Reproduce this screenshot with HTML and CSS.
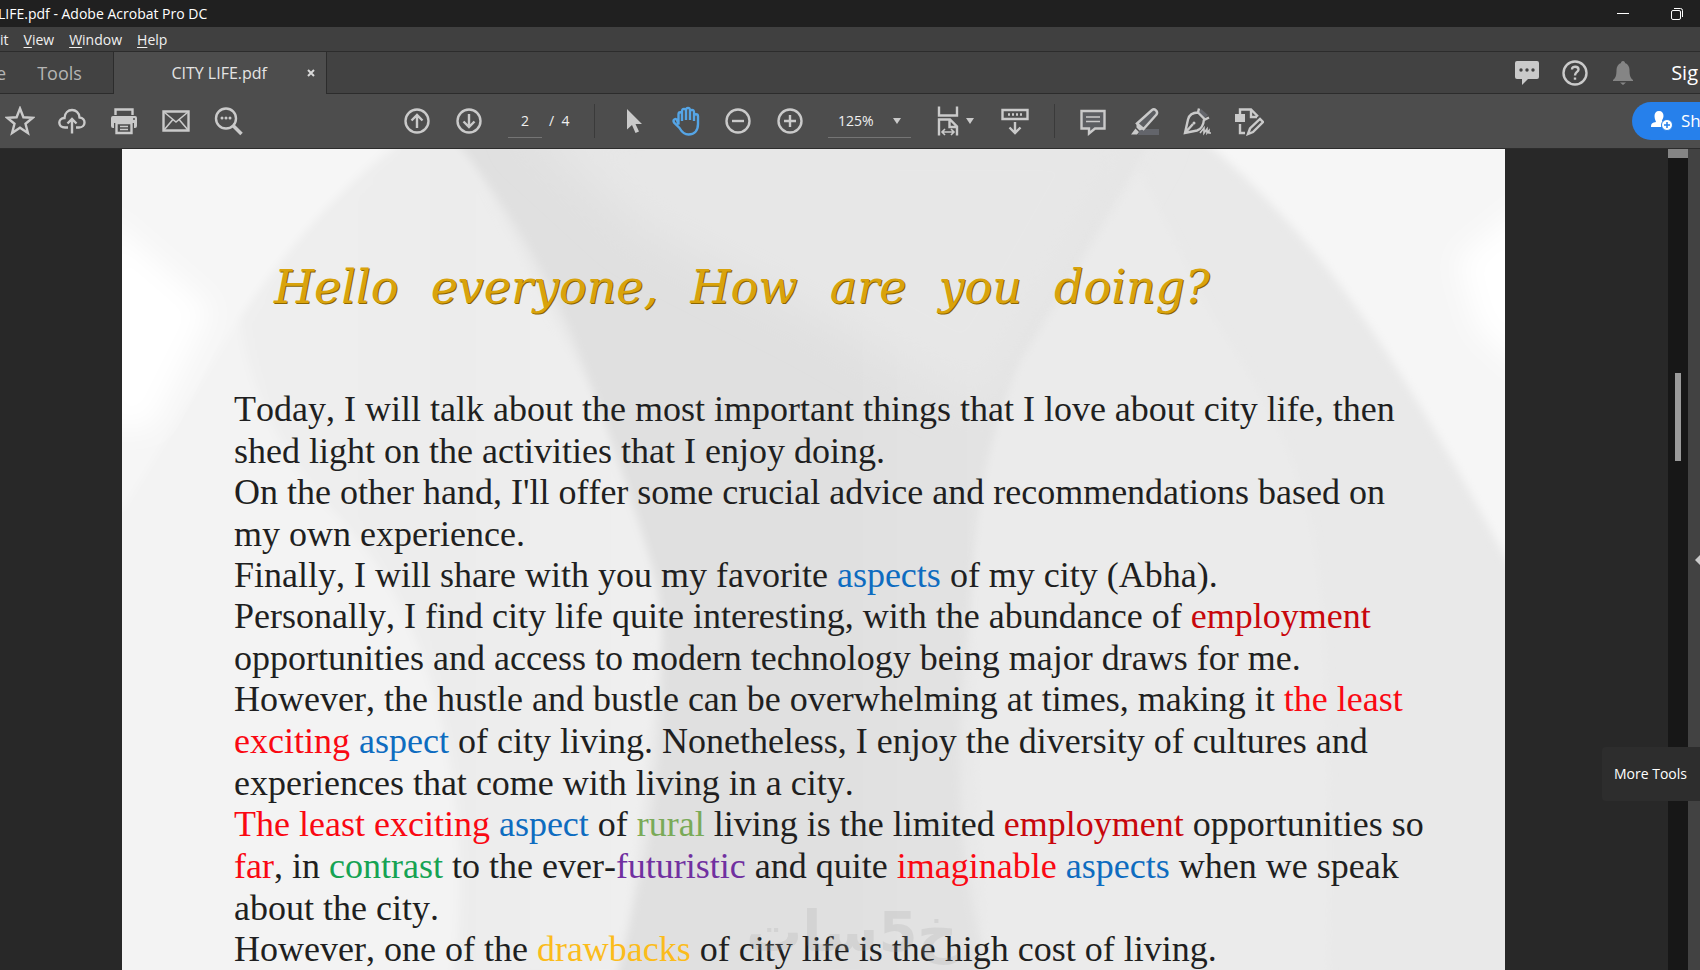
FILE: index.html
```html
<!DOCTYPE html>
<html lang="en">
<head>
<meta charset="utf-8">
<title>CITY LIFE.pdf - Adobe Acrobat Pro DC</title>
<link rel="stylesheet" href="styles.css">
</head>
<body>
<header class="titlebar">
  <span class="titlebar-text">LIFE.pdf - Adobe Acrobat Pro DC</span>
  <button class="win-btn" aria-label="Minimize"><svg width="12" height="12" viewBox="0 0 12 12"><path d="M0 5.500h12" stroke="#fff"/></svg></button>
  <button class="win-btn" aria-label="Restore"><svg width="12" height="12" viewBox="0 0 12 12" fill="none" stroke="#fff"><rect x=".5" y="2.500" width="9" height="9" rx="1.500"/><path d="M3 .5h6.500a2 2 0 0 1 2 2V9"/></svg></button>
</header>
<nav class="menubar">
  <button class="menu">it</button>
  <button class="menu"><u>V</u>iew</button>
  <button class="menu"><u>W</u>indow</button>
  <button class="menu"><u>H</u>elp</button>
</nav>
<div class="tabs">
  <button class="tab tab-home">e</button>
  <button class="tab tab-tools">Tools</button>
  <div class="tab-active"><span>CITY LIFE.pdf</span><button class="close" aria-label="Close tab"><svg width="8" height="8" viewBox="0 0 8 8"><path d="M1 1l6 6M7 1L1 7" stroke="#d8d8d8" stroke-width="2"/></svg></button></div>
  <div class="account">
    <button class="acc" aria-label="Messages"><svg width="26" height="26" viewBox="0 0 26 26"><path fill="#cacaca" d="M3 1h20a2 2 0 0 1 2 2v14a2 2 0 0 1-2 2h-9l-6 6v-6H3a2 2 0 0 1-2-2V3a2 2 0 0 1 2-2z"/><g fill="#424242"><circle cx="7" cy="10" r="1.700"/><circle cx="13" cy="10" r="1.700"/><circle cx="19" cy="10" r="1.700"/></g></svg></button>
    <button class="acc" aria-label="Help"><svg width="26" height="26" viewBox="0 0 26 26" fill="none" stroke="#cacaca" stroke-width="2.400"><circle cx="13" cy="13" r="11.500"/><path d="M10 9.500c0-4 6.500-3.500 6.500 0 0 2.500-3.500 2.500-3.500 6"/><path d="M13 17.500v2.200"/></svg></button>
    <button class="acc" aria-label="Notifications"><svg width="22" height="26" viewBox="0 0 22 26" fill="#858585"><path d="M11 1c1.500 0 2 1 2 2 3 1 4.500 4 4.500 7 0 6 1 8 3.500 10v1H1v-1c2.500-2 3.500-4 3.500-10 0-3 1.500-6 4.500-7 0-1 .5-2 2-2zM8 22.500h6l-3 2.500z"/></svg></button>
    <a class="signin" href="#">Sig</a>
  </div>
</div>
<div class="toolbar">
  <div class="group group-file">
    <button class="tool" aria-label="Star"><svg width="30" height="30" viewBox="0 0 30 30"><path d="M15 2.500l3.400 8.800 9.400.5-7.300 6 2.400 9.200-7.900-5.200L7.100 27l2.400-9.200-7.300-6 9.400-.5z"/></svg></button>
    <button class="tool" aria-label="Upload"><svg width="30" height="30" viewBox="0 0 30 30"><path d="M11 21.500H8C.500 21.500.500 12 7.500 12 8 1.500 22 1.500 22.500 11.500 29.500 12 29 21.500 22 21.500h-3M15 27.500V13M10.500 17.500L15 13l4.500 4.500"/></svg></button>
    <button class="tool" aria-label="Print"><svg width="30" height="30" viewBox="0 0 30 30"><path d="M6.500 9V3.500h17V9"/><path class="solid" d="M4 10h22a2 2 0 0 1 2 2v8a2 2 0 0 1-2 2h-1v-5H5v5H4a2 2 0 0 1-2-2v-8a2 2 0 0 1 2-2z"/><path d="M7.500 17h15v10h-15z"/><path class="thin" d="M11 20.500h8M11 23.500h8"/><circle cx="25" cy="13" r="1" fill="#4d4d4d" stroke="none"/></svg></button>
    <button class="tool" aria-label="Email"><svg width="30" height="30" viewBox="0 0 30 30"><path d="M2.500 5.500h25v19h-25z"/><path class="thin" d="M3 6l12 10L27 6M3 24l8.500-10M27 24l-8.500-10"/></svg></button>
    <button class="tool" aria-label="Find"><svg width="30" height="30" viewBox="0 0 30 30"><circle cx="13" cy="12.500" r="10"/><path stroke-width="3.500" d="M20 19.500l8.500 8.500"/><g class="solid"><circle cx="9" cy="12" r="1.500"/><circle cx="13" cy="12" r="1.500"/><circle cx="17" cy="12" r="1.500"/></g></svg></button>
  </div>
  <div class="group group-page">
    <button class="tool" aria-label="Previous page"><svg width="30" height="30" viewBox="0 0 30 30"><circle cx="15" cy="15" r="11.500"/><path d="M15 22V9.500M9.500 14.500L15 9l5.500 5.500"/></svg></button>
    <button class="tool" aria-label="Next page"><svg width="30" height="30" viewBox="0 0 30 30"><circle cx="15" cy="15" r="11.500"/><path d="M15 8v12.500M9.500 15.500L15 21l5.500-5.500"/></svg></button>
    <input class="page-input" aria-label="Page number" value="2">
    <span class="page-total">/&nbsp; 4</span>
  </div>
  <div class="group group-view">
    <button class="tool" aria-label="Select"><svg width="30" height="30" viewBox="0 0 30 30"><path class="solid" d="M8 3v20.500l5-4.500 3.500 8 3.500-1.500-3.500-7.500h6.500z"/></svg></button>
    <button class="tool tool-on" aria-label="Pan"><svg width="30" height="30" viewBox="0 0 30 30"><path d="M7.500 18.500V8.500c0-3 3.500-3 3.500 0V15 5.500c0-3.500 4-3.500 4 0V14 4.500c0-3.500 4-3.500 4 0V14 6.500c0-3.500 4-3.500 4 0V15v-4.500c0-3 4-3 4 0V18c0 7-4 10.500-9.500 10.500-5 0-7-3-9-6.500L3 16.500c-1.500-3 1.500-4.500 3-2.500z"/></svg></button>
    <button class="tool" aria-label="Zoom out"><svg width="30" height="30" viewBox="0 0 30 30"><circle cx="15" cy="15" r="11.500"/><path d="M9 15h12"/></svg></button>
    <button class="tool" aria-label="Zoom in"><svg width="30" height="30" viewBox="0 0 30 30"><circle cx="15" cy="15" r="11.500"/><path d="M9 15h12M15 9v12"/></svg></button>
    <div class="zoom">
      <select class="zoom-select" aria-label="Zoom level"><option>125%</option></select>
      <svg width="8" height="6" viewBox="0 0 8 6"><path d="M0 0h8L4 6z" fill="#cacaca"/></svg>
    </div>
    <button class="tool tool-fit" aria-label="Fit width"><svg width="30" height="30" viewBox="0 0 30 30"><path d="M6 .5v9h18v-9M6 29.500V13.500h11l7 7v9M16.500 14v7H24"/><path class="thin" d="M9 26h12M12 23l-3 3 3 3M18 23l3 3-3 3"/></svg><svg width="8" height="6" viewBox="0 0 8 6"><path class="caret" d="M0 0h8L4 6z"/></svg></button>
    <button class="tool" aria-label="Scrolling"><svg width="30" height="30" viewBox="0 0 30 30"><path d="M2.500 4h25v9h-25zM15 16v11M9.500 21.500L15 27l5.500-5.500"/><path stroke-dasharray="2 2" d="M8 8.500h14"/></svg></button>
  </div>
  <div class="group group-edit">
    <button class="tool" aria-label="Comment"><svg width="30" height="30" viewBox="0 0 30 30"><path fill="#5c5e62" d="M3.500 5h23v17.500H17l-6 5v-5H3.500z"/><path class="thin" d="M8 11h14M8 15.500h14"/></svg></button>
    <button class="tool" aria-label="Highlight"><svg width="30" height="30" viewBox="0 0 30 30"><path d="M10 23h19v6H8z" fill="#63656b" stroke="none"/><path fill="#5c5e62" d="M7 17.500L22 4c2.500-2 6.500 1.500 4.500 4.500L13.500 23z"/><path class="solid" d="M6.500 17l7.500 6-4.500 1.500-3-3zM5.500 22.500L9 26l-2 2.500H1z"/></svg></button>
    <button class="tool" aria-label="Sign"><svg width="30" height="30" viewBox="0 0 30 30"><path fill="#63656b" stroke="none" d="M19 3l7 6-4 4-6-6z"/><path d="M17 2.500l-1 4 7 7 4-2M16 6.500c-6 0-9 3-10 7L3 27l12-2.500c5-1.500 6.500-6 7-11M3 27l8-9"/><path class="thin" d="M18 27l4-5v5l3-4v4l2-2.500V27h2"/><circle class="solid" cx="12" cy="17" r="1.500"/></svg></button>
    <button class="tool" aria-label="Organize"><svg width="30" height="30" viewBox="0 0 30 30"><path class="solid" d="M1 8h10v8H1z"/><path d="M6 8V3.500h11l7 7M17 4v7h6M6 18v9h5"/><path fill="#4d4d4d" d="M14 28l2-5.500L26 13l3 3-10 10z"/></svg></button>
  </div>
  <button class="share"><svg width="24" height="22" viewBox="0 0 24 22"><path fill="#fff" d="M9 1c3 0 4.500 2 4.500 5 0 2-1 3-1.500 4.500 0 1 1 1.500 2 2L11 17H1c0-4 2-4.500 5-5 0-1-1.500-2.500-1.500-6C4.500 3 6 1 9 1z"/><circle cx="17" cy="15" r="5.500" fill="#fff" stroke="#2680eb"/><path d="M17 12v6M14 15h6" stroke="#2680eb" stroke-width="1.500"/></svg>Sh</button>
</div>
<main class="workspace">
  <article class="page">
    <svg class="backdrop" viewBox="0 0 1383 821" preserveAspectRatio="none">
      <defs>
        <linearGradient id="mid" x1="0" x2="1" y1="0" y2="0"><stop offset="0" stop-color="#e0e0e0"/><stop offset=".5" stop-color="#e0e0e0"/><stop offset="1" stop-color="#e5e5e5"/></linearGradient>
        <linearGradient id="leaf" x1="0" x2="1" y1="0" y2="0"><stop offset="0" stop-color="#efefef"/><stop offset=".5" stop-color="#ececec"/><stop offset="1" stop-color="#f0f0f0"/></linearGradient>
        <filter id="soft"><feGaussianBlur stdDeviation="4"/></filter>
        <filter id="haze"><feGaussianBlur stdDeviation="14"/></filter>
        <filter id="fade"><feGaussianBlur stdDeviation="22"/></filter>
      </defs>
      <rect width="1383" height="821" fill="#e9e9e9"/>
      <g filter="url(#soft)">
        <path fill="#f3f3f3" d="M-10 -10H345V830H-10z"/>
        <path fill="#f6f6f6" d="M-10 -10H275Q190 60 118 169L0 362H-10z"/>
        <path fill="url(#leaf)" d="M275 -10H340L550 400 500 830H332Q350 700 320 571T212 362 118 169Q190 60 275 0z"/>
        <path fill="url(#mid)" d="M332 -10Q420 100 462 216T529 414 525 702L494 830H868Q830 700 840 550T898 216L1028 -10z"/>
      </g>
      <path filter="url(#fade)" fill="#e7e7e7" d="M400 -30L520 80 698 170 860 260 898 200 1028 -30z"/>
      <g filter="url(#soft)">
        <path fill="#ebebeb" d="M1018 22L898 216Q860 300 853 393T866 830H1206Q1210 500 1192 393T1090 168z"/>
        <path fill="#f6f6f6" d="M1080 -10Q1170 65 1241 168T1400 440V-10z"/>
      </g>
      <g filter="url(#haze)">
        <path fill="#fff" d="M-20 65L90 160 30 280H-20z"/>
        <path fill="#fff" d="M1410 50L1335 110 1355 180 1410 230z"/>
      </g>
    </svg>
    <h1 class="greeting">Hello&ensp;&thinsp;everyone,&ensp;&thinsp;How&ensp;&thinsp;are&ensp;&thinsp;you&ensp;&thinsp;doing?</h1>
    <div class="prose">
      <p>Today, I will talk about the most important things that I love about city life, then<br>shed light on the activities that I enjoy doing.</p>
      <p>On the other hand, I'll offer some crucial advice and recommendations based on<br>my own experience.</p>
      <p>Finally, I will share with you my favorite <span class="blue">aspects</span> of my city (Abha).</p>
      <p>Personally, I find city life quite interesting, with the abundance of <span class="crimson">employment</span><br>opportunities and access to modern technology being major draws for me.</p>
      <p>However, the hustle and bustle can be overwhelming at times, making it <span class="red">the least<br>exciting</span> <span class="blue">aspect</span> of city living. Nonetheless, I enjoy the diversity of cultures and<br>experiences that come with living in a city.</p>
      <p><span class="red">The least exciting</span> <span class="blue">aspect</span> of <span class="olive">rural</span> living is the limited <span class="crimson">employment</span> opportunities so<br><span class="red">far</span>, in <span class="green">contrast</span> to the ever-<span class="purple">futuristic</span> and quite <span class="red">imaginable</span> <span class="blue">aspects</span> when we speak<br>about the city.</p>
      <p>However, one of the <span class="gold">drawbacks</span> of city life is the high cost of living.</p>
    </div>
    <div class="watermark" lang="ar" dir="rtl">خ5سات</div>
  </article>
  <div class="scrollbar"><div class="scroll-top"></div><div class="scroll-thumb"></div></div>
  <button class="panel" aria-label="Show tools pane"><svg width="5" height="10" viewBox="0 0 5 10"><path d="M5 0v10L0 5z" fill="#cacaca"/></svg></button>
  <div class="tooltip" role="tooltip">More Tools</div>
</main>
</body>
</html>
```
FILE: styles.css
```css
* { box-sizing: border-box; }
body {
  margin: 0;
  height: 100vh;
  display: flex;
  flex-direction: column;
  overflow: hidden;
  background: #282828;
  color: #f0f0f0;
  font: 14px/20px "Open Sans", "Noto Sans", sans-serif;
}
button, input, select {
  margin: 0;
  padding: 0;
  border: 0;
  background: none;
  color: inherit;
  font: inherit;
}
svg { display: block; flex: none; }

.titlebar {
  display: flex;
  align-items: center;
  height: 27px;
  flex: none;
  background: #202020;
  color: #fff;
}
.titlebar-text { flex: 1; margin-left: -2px; }
.win-btn { width: 60px; height: 27px; display: grid; place-items: center; }
.win-btn:last-child { width: 47px; }

.menubar {
  display: flex;
  gap: 15px;
  height: 25px;
  flex: none;
  align-items: center;
  padding-top: 2px;
  background: #404040;
  border-bottom: 1px solid #2c2c2c;
}
.menu u { text-underline-offset: 2px; }

.tabs {
  display: flex;
  height: 42px;
  flex: none;
  background: #424242;
}
.tab { border-bottom: 1px solid #2c2c2c; color: #b4b4b4; font-size: 18px; }
.tab-home { width: 6px; text-align: left; overflow: hidden; direction: rtl; }
.tab-tools { width: 107px; }
.tab-active {
  display: flex;
  align-items: center;
  justify-content: flex-end;
  gap: 40px;
  width: 214px;
  padding-right: 11px;
  background: #4d4d4d;
  border-left: 1px solid #2c2c2c;
  border-right: 1px solid #2c2c2c;
  color: #e4e4e4;
  font-size: 16px;
}
.account {
  flex: 1;
  display: flex;
  align-items: center;
  justify-content: flex-end;
  border-bottom: 1px solid #2c2c2c;
}
.acc { width: 48px; display: grid; place-items: center; }
.signin { margin-left: 24px; color: #fff; font-size: 20px; text-decoration: none; margin-right: 2px; }

.toolbar {
  display: flex;
  align-items: center;
  height: 55px;
  flex: none;
  background: #4d4d4d;
  border-bottom: 1px solid #2c2c2c;
}
.group { display: flex; align-items: center; height: 34px; }
.group-file { margin-left: -6px; }
.group-page { margin-left: 137px; }
.group-view { margin-left: 23px; padding-left: 13px; border-left: 1px solid #3a3a3a; }
.group-edit { margin-left: 13px; padding-left: 12px; border-left: 1px solid #3a3a3a; }
.tool {
  display: flex;
  align-items: center;
  justify-content: center;
  width: 52px;
  height: 34px;
  fill: none;
  stroke: #cacaca;
  stroke-width: 2.4;
}
.tool-on { stroke: #55a5e6; }
.tool .solid, .tool .caret { fill: #cacaca; stroke: none; }
.tool .thin { stroke-width: 1.6; }
.tool-fit { width: 66px; gap: 3px; margin: 0 3px 0 9px; }
.page-input {
  width: 34px;
  height: 34px;
  margin: 0 7px 0 13px;
  border-bottom: 1px solid #757575;
  text-align: center;
}
.page-total { width: 22px; white-space: nowrap; }
.zoom {
  display: flex;
  align-items: center;
  width: 83px;
  height: 34px;
  margin-left: 12px;
  padding: 0 10px;
  border-bottom: 1px solid #757575;
}
.zoom-select { flex: 1; appearance: none; }
.share {
  display: flex;
  align-items: center;
  gap: 7px;
  width: 68px;
  height: 38px;
  margin-left: auto;
  padding-left: 18px;
  border-radius: 19px 0 0 19px;
  background: #2680eb;
  color: #fff;
  font-size: 17px;
  overflow: hidden;
}

.workspace {
  position: relative;
  flex: 1;
  min-height: 0;
  display: flex;
}
.page {
  position: relative;
  flex: 1;
  margin: 0 163px 0 122px;
  padding: 104px 0 0 112px;
  overflow: hidden;
  background: #ececec;
  color: #1f1f21;
}
.backdrop { position: absolute; inset: 0; width: 100%; height: 100%; }
.greeting {
  position: relative;
  margin: 0 0 67px;
  padding-left: 40px;
  font: italic 46px/68px "DejaVu Serif", serif;
  white-space: nowrap;
  color: #d9a30c;
  text-shadow: 1px 1px 0 #8a6500;
}
.prose {
  position: relative;
  font: 36px/42px "Liberation Serif", serif;
  font-kerning: none;
  white-space: nowrap;
}
.prose p { margin: 0 0 -1px; }
.blue { color: #0e6cc0; }
.crimson { color: #c8060c; }
.red { color: #fa0812; }
.olive { color: #7aaa58; }
.green { color: #16a353; }
.purple { color: #7030a0; }
.gold { color: #fbbc1c; }
.watermark {
  position: absolute;
  left: 624px;
  bottom: 0;
  font: bold 56px/76px "DejaVu Sans", sans-serif;
  color: #a0a0a0;
  opacity: .2;
}
.scrollbar { width: 20px; background: #171717; }
.scroll-top { height: 9px; background: #858585; }
.scroll-thumb { width: 6px; height: 88px; margin: 215px 0 0 7px; background: #9a9a9a; }
.panel {
  display: flex;
  align-items: center;
  justify-content: flex-end;
  width: 12px;
  background: #424242;
}
.tooltip {
  position: absolute;
  right: 0;
  bottom: 169px;
  width: 98px;
  padding: 17px 0 17px 12px;
  border-radius: 4px 0 0 4px;
  background: #2d2d2d;
  color: #fff;
  white-space: nowrap;
}
```
